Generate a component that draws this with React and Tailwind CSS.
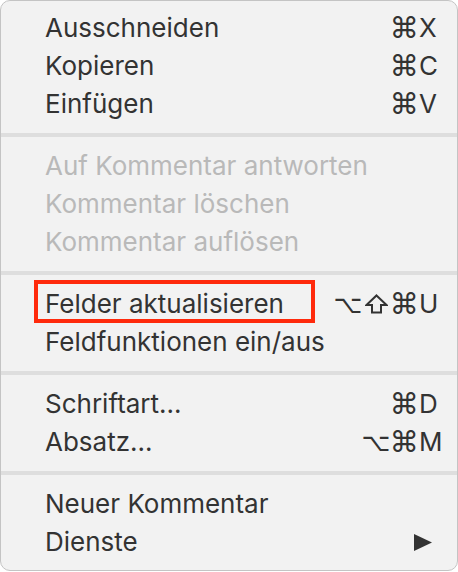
import React from 'react';

const groups = [
  [
    { label: 'Ausschneiden', mods: ['⌘'], key: 'X' },
    { label: 'Kopieren', mods: ['⌘'], key: 'C' },
    { label: 'Einfügen', mods: ['⌘'], key: 'V' },
  ],
  [
    { label: 'Auf Kommentar antworten', disabled: true },
    { label: 'Kommentar löschen', disabled: true },
    { label: 'Kommentar auflösen', disabled: true },
  ],
  [
    { label: 'Felder aktualisieren', mods: ['⌥', '⇧', '⌘'], key: 'U', marked: true },
    { label: 'Feldfunktionen ein/aus' },
  ],
  [
    { label: 'Schriftart...', mods: ['⌘'], key: 'D' },
    { label: 'Absatz...', mods: ['⌥', '⌘'], key: 'M' },
  ],
  [
    { label: 'Neuer Kommentar' },
    { label: 'Dienste', submenu: true },
  ],
];

// DejaVu draws these symbols at odd sizes, so each gets its own tuning
const modSize = {
  '⌘': 'text-[29px]',
  '⌥': 'text-[25px]',
};

const ShiftIcon = () => (
  <svg width="23" height="20" viewBox="0 0 23 20" aria-label="⇧">
    <path
      d="M11.5 1.5 L21.5 11 L16 11 L16 18.5 L7 18.5 L7 11 L1.5 11 Z"
      fill="none"
      stroke="#333333"
      strokeWidth="2"
      strokeLinejoin="miter"
    />
  </svg>
);

const MenuRow = ({ item }) => (
  <div
    className={`relative flex items-center h-[38px] pl-[44px] pr-[15px] ${
      item.disabled ? 'text-[#b9b9b9]' : 'text-[#333333]'
    }`}
  >
    <span className="flex-1 whitespace-nowrap">{item.label}</span>

    {item.key && (
      <div className="flex items-center">
        {item.mods.map((m, i) => (
          <span key={i} className="w-[28px] flex justify-center">
            {m === '⇧' ? (
              <ShiftIcon />
            ) : (
              <span className={`font-['DejaVu_Sans',sans-serif] ${modSize[m]}`}>{m}</span>
            )}
          </span>
        ))}
        <span className="w-[24px] pl-[1px] text-left">{item.key}</span>
      </div>
    )}

    {item.submenu && (
      <svg width="18" height="17" viewBox="0 0 18 17" className="mr-[10px]">
        <polygon points="0,0 18,8.5 0,17" fill="#333333" />
      </svg>
    )}

    {/* red highlight frame from the annotation */}
    {item.marked && (
      <div className="absolute left-[33px] top-[-5px] w-[281px] h-[43px] border-[4px] border-[#ff2a0c]" />
    )}
  </div>
);

export default function App() {
  return (
    <div className="w-[458px] h-[572px] bg-white">
      <div className="w-[458px] h-[571px] bg-[#f2f2f2] border border-[#c4c4c4] rounded-[10px] py-[8px] font-['Inter','Liberation_Sans',sans-serif] text-[26px] leading-none">
        {groups.map((group, gi) => (
          <div key={gi}>
            {gi > 0 && <div className="my-[10px] h-[4px] bg-[#dedede]" />}
            {group.map((item) => (
              <MenuRow key={item.label} item={item} />
            ))}
          </div>
        ))}
      </div>
    </div>
  );
}
